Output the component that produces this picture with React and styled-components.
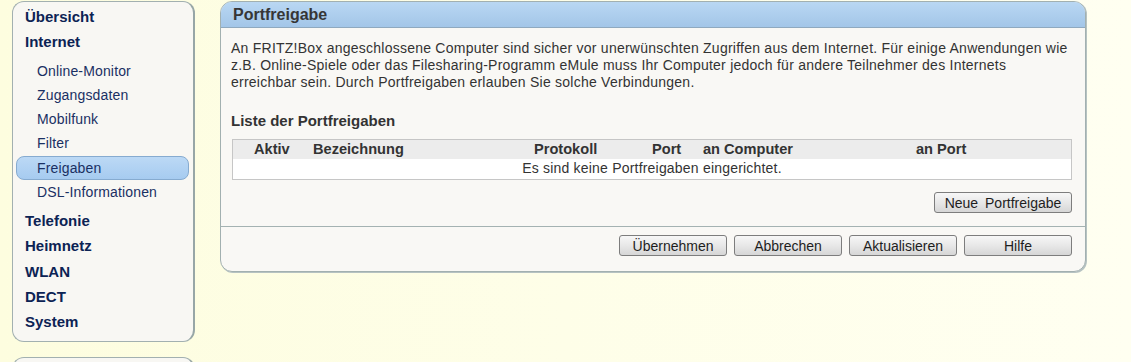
import React from 'react'
import styled, { createGlobalStyle } from 'styled-components'

const GlobalStyle = createGlobalStyle`
    html, body {
        margin: 0;
        padding: 0;
    }
    body {
        background: linear-gradient(to right, #fdfddf 0%, #fefee8 50%, #fffff1 100%);
        font-family: "Liberation Sans", Arial, sans-serif;
        font-size: 14px;
        color: #333;
        height: 362px;
        overflow: hidden;
    }
`

const Page = styled.div`
    display: flex;
    align-items: flex-start;
    gap: 25px;
    padding: 1px 0 0 12px;
`

const Sidebar = styled.div`
    display: flex;
    flex-direction: column;
    gap: 15px;
    width: 183px;
`

const NavBox = styled.nav`
    box-sizing: border-box;
    width: 183px;
    background: #f8f7f3;
    border: 1px solid #a2b0b0;
    border-right: 2px solid #97a6a6;
    border-radius: 12px;
    padding: 2px 0 6px 0;
    height: ${(p) => p.h || 'auto'};
`

const NavItem = styled.div`
    height: 25.4px;
    line-height: 25.4px;
    padding-left: 12px;
    font-size: 15px;
    font-weight: bold;
    color: #0c2354;
`

const SubList = styled.div`
    margin: 4px 0 4px 0;
`

const SubItem = styled.div`
    box-sizing: border-box;
    height: 24.2px;
    line-height: 22px;
    margin: 0 4px 0 3px;
    padding-left: 20px;
    font-size: 14px;
    letter-spacing: 0.15px;
    color: #1a3063;
    border: 1px solid ${(p) => (p.active ? '#86abd0' : 'transparent')};
    border-radius: 8px;
    background: ${(p) => (p.active ? 'linear-gradient(#bcd9f5, #a6cbf0)' : 'transparent')};
`

const Panel = styled.section`
    box-sizing: border-box;
    width: 866px;
    height: 271px;
    background: #f9f8f5;
    border: 1px solid #a2b0b0;
    border-radius: 12px;
    box-shadow: 1px 1px 0 #b6c2c2;
    display: flex;
    flex-direction: column;
    overflow: hidden;
`

const PanelHeader = styled.header`
    height: 25px;
    line-height: 25px;
    padding-left: 12px;
    background: linear-gradient(#b9d7f3, #a3c6e8);
    border-bottom: 1px solid #8fa9bf;
    font-size: 16px;
    font-weight: bold;
    color: #363636;
`

const PanelBody = styled.div`
    padding: 12px 13px 0 10px;
    flex: 1;
`

const Intro = styled.p`
    margin: 0 1px 0 0;
    line-height: 17px;
    letter-spacing: 0.24px;
`

const SubTitle = styled.h3`
    margin: 21px 0 10px 0;
    font-size: 15px;
    line-height: 17px;
    font-weight: bold;
    color: #333;
`

const Table = styled.div`
    margin-left: 1px;
    border: 1px solid #c6c6c6;
`

const HeadRow = styled.div`
    display: grid;
    grid-template-columns: 59px 221px 118px 51px 213px 1fr;
    padding-left: 21px;
    height: 19px;
    line-height: 19px;
    background: #ececec;
    font-size: 14.6px;
    font-weight: bold;
    color: #333;
`

const EmptyRow = styled.div`
    height: 20px;
    line-height: 19px;
    background: #fff;
    text-align: center;
    letter-spacing: 0.2px;
`

const Actions = styled.div`
    display: flex;
    justify-content: flex-end;
    gap: 7px;
    margin-top: ${(p) => p.mt || 0}px;
`

const Button = styled.button`
    box-sizing: border-box;
    width: ${(p) => p.w || 108}px;
    height: 21px;
    padding: 0;
    border: 1px solid #7d7d7d;
    border-radius: 3px;
    background: linear-gradient(#f7f7f7, #e6e6e6 55%, #d6d6d6);
    font-family: "Liberation Sans", Arial, sans-serif;
    font-size: 14px;
    color: #1e1e1e;
    word-spacing: ${(p) => p.ws || 0}px;
`

const Footer = styled.div`
    box-sizing: border-box;
    flex: none;
    height: 45px;
    border-top: 1px solid #a4b2b2;
    padding: 8px 13px 0 10px;
`

const topItems = ['Übersicht', 'Internet']
const internetItems = ['Online-Monitor', 'Zugangsdaten', 'Mobilfunk', 'Filter', 'Freigaben', 'DSL-Informationen']
const bottomItems = ['Telefonie', 'Heimnetz', 'WLAN', 'DECT', 'System']
const columns = ['Aktiv', 'Bezeichnung', 'Protokoll', 'Port', 'an Computer', 'an Port']

const App = () => (
    <>
        <GlobalStyle />
        <Page>
            <Sidebar>
                <NavBox>
                    {topItems.map((t) => <NavItem key={t}>{t}</NavItem>)}
                    <SubList>
                        {internetItems.map((t) => (
                            <SubItem key={t} active={t === 'Freigaben' ? 1 : 0}>{t}</SubItem>
                        ))}
                    </SubList>
                    {bottomItems.map((t) => <NavItem key={t}>{t}</NavItem>)}
                </NavBox>
                <NavBox h="40px" />
            </Sidebar>
            <Panel>
                <PanelHeader>Portfreigabe</PanelHeader>
                <PanelBody>
                    <Intro>
                        An FRITZ!Box angeschlossene Computer sind sicher vor unerwünschten Zugriffen aus dem Internet. Für einige Anwendungen wie z.B. Online-Spiele oder das Filesharing-Programm eMule muss Ihr Computer jedoch für andere Teilnehmer des Internets erreichbar sein. Durch Portfreigaben erlauben Sie solche Verbindungen.
                    </Intro>
                    <SubTitle>Liste der Portfreigaben</SubTitle>
                    <Table>
                        <HeadRow>
                            {columns.map((c) => <span key={c}>{c}</span>)}
                        </HeadRow>
                        <EmptyRow>Es sind keine Portfreigaben eingerichtet.</EmptyRow>
                    </Table>
                    <Actions mt={12}>
                        <Button w={138} ws={3}>Neue Portfreigabe</Button>
                    </Actions>
                </PanelBody>
                <Footer>
                    <Actions>
                        <Button>Übernehmen</Button>
                        <Button>Abbrechen</Button>
                        <Button>Aktualisieren</Button>
                        <Button>Hilfe</Button>
                    </Actions>
                </Footer>
            </Panel>
        </Page>
    </>
)

export default App
